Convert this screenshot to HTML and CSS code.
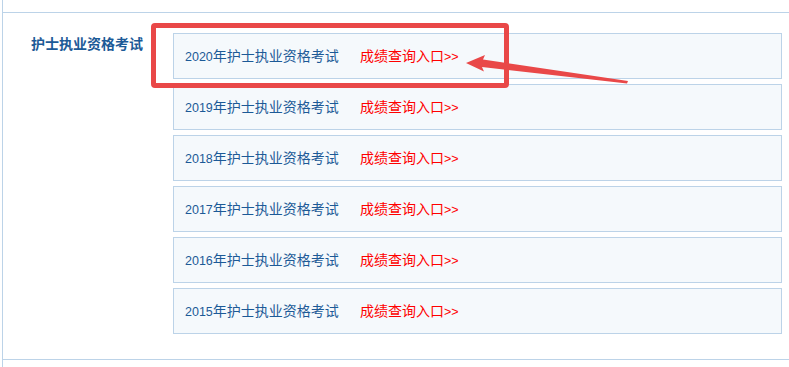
FILE: index.html
```html
<!DOCTYPE html>
<html lang="zh-CN">
<head>
<meta charset="utf-8">
<title>护士执业资格考试</title>
<link rel="stylesheet" href="styles.css">
</head>
<body>
<div class="frame">
  <div class="top-row"></div>
  <div class="section">
    <div class="label">护士执业资格考试</div>
    <div class="list">
      <div class="item"><span class="title"><span class="num">2020</span>年护士执业资格考试</span><a class="link" href="#">成绩查询入口<span class="num">&gt;&gt;</span></a></div>
      <div class="item"><span class="title"><span class="num">2019</span>年护士执业资格考试</span><a class="link" href="#">成绩查询入口<span class="num">&gt;&gt;</span></a></div>
      <div class="item"><span class="title"><span class="num">2018</span>年护士执业资格考试</span><a class="link" href="#">成绩查询入口<span class="num">&gt;&gt;</span></a></div>
      <div class="item"><span class="title"><span class="num">2017</span>年护士执业资格考试</span><a class="link" href="#">成绩查询入口<span class="num">&gt;&gt;</span></a></div>
      <div class="item"><span class="title"><span class="num">2016</span>年护士执业资格考试</span><a class="link" href="#">成绩查询入口<span class="num">&gt;&gt;</span></a></div>
      <div class="item"><span class="title"><span class="num">2015</span>年护士执业资格考试</span><a class="link" href="#">成绩查询入口<span class="num">&gt;&gt;</span></a></div>
    </div>
  </div>
  <div class="bottom-row"></div>
</div>
<div class="highlight"></div>
<svg class="arrow" width="789" height="367" viewBox="0 0 789 367">
  <polygon points="466,63 485,55 483,59.5 628,81 627,83.5 482,67 484,71.5" fill="#e94848"/>
</svg>
</body>
</html>
```
FILE: styles.css
```css
html, body {
  margin: 0;
  padding: 0;
  background: #ffffff;
}
body {
  width: 789px;
  height: 367px;
  overflow: hidden;
  position: relative;
  font-family: "Noto Sans CJK SC", "Microsoft YaHei", sans-serif;
}
.frame {
  margin-left: 2px;
  border-left: 1px solid #bcd3e8;
  height: 367px;
  box-sizing: border-box;
}
.top-row {
  height: 12px;
  border-bottom: 1px solid #bcd3e8;
}
.section {
  display: flex;
  padding: 20px 0 25px;
  border-bottom: 1px solid #bcd3e8;
}
.label {
  width: 142px;
  padding-left: 28px;
  font-size: 14px;
  font-weight: bold;
  line-height: 21px;
  color: #1c5a97;
  flex-shrink: 0;
}
.list {
  flex: 1;
  margin-right: 7px;
  display: flex;
  flex-direction: column;
  gap: 5px;
}
.item {
  height: 46px;
  box-sizing: border-box;
  border: 1px solid #bcd3e8;
  background: #f5f9fc;
  display: flex;
  align-items: center;
  padding-left: 11px;
  font-size: 14px;
  line-height: 20px;
}
.title {
  color: #1c5a97;
  width: 175px;
  flex-shrink: 0;
}
.link {
  color: #ff0000;
  text-decoration: none;
}
.num {
  font-family: "Liberation Sans", Arial, sans-serif;
  font-size: 12.5px;
}
.highlight {
  position: absolute;
  left: 151px;
  top: 23px;
  width: 358px;
  height: 65px;
  box-sizing: border-box;
  border: 5px solid #e94848;
  border-radius: 4px;
}
.arrow {
  position: absolute;
  left: 0;
  top: 0;
}
```
